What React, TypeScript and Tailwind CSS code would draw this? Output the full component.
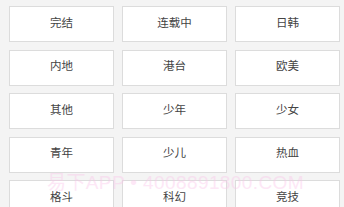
const tags = [
  '完结', '连载中', '日韩',
  '内地', '港台', '欧美',
  '其他', '少年', '少女',
  '青年', '少儿', '热血',
  '格斗', '科幻', '竞技',
];

export default function App() {
  return (
    <div
      className="relative w-[344px] h-[207px] overflow-hidden bg-[#f4f4f4]"
      style={{ fontFamily: '"Noto Sans CJK SC", "Noto Sans", sans-serif' }}
    >
      <div className="grid grid-cols-[105px_105px_105px] gap-x-[8px] gap-y-[7.5px] pl-[9px] pt-[6px]">
        {tags.map((t) => (
          <div
            key={t}
            className="h-[36px] flex items-center justify-center bg-white border border-[#dcdcdc] text-[11.5px] text-[#444] pb-[3px]"
          >
            {t}
          </div>
        ))}
      </div>
      {/* watermark */}
      <div
        className="absolute left-[47px] top-[172px] text-[19px] leading-[22px] tracking-[0.4px] text-[#fbc4ea] opacity-40 whitespace-nowrap pointer-events-none"
        style={{ fontFamily: '"Liberation Sans", "Noto Sans CJK SC", sans-serif' }}
      >
        易下APP • 4008891800.COM
      </div>
    </div>
  );
}
